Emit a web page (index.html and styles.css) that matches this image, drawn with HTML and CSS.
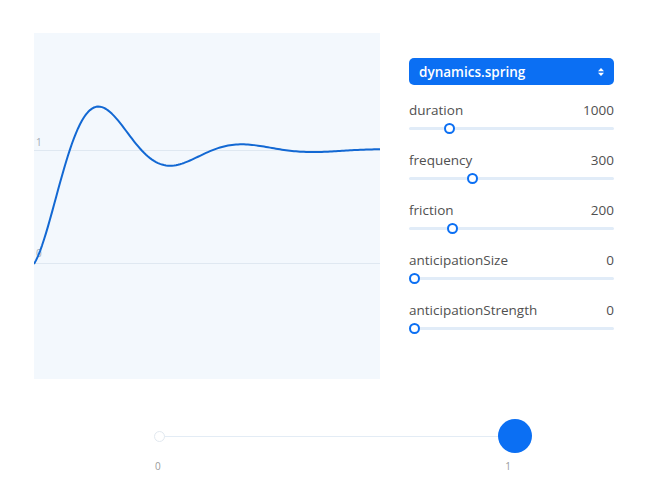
FILE: index.html
```html
<!DOCTYPE html>
<html lang="en">
<head>
<meta charset="utf-8">
<title>dynamics.spring</title>
<link rel="stylesheet" href="styles.css">
</head>
<body>
<div class="app">
  <div class="top">
    <div class="chart">
      <svg class="chart-svg" width="346" height="346" viewBox="0 0 346 346">
        <line class="grid" x1="0" y1="117.5" x2="346" y2="117.5"/>
        <line class="grid" x1="0" y1="230.5" x2="346" y2="230.5"/>
        <text class="axis-label" x="2" y="113">1</text>
        <text class="axis-label" x="2" y="224">0</text>
        <path id="curve" class="curve" d=""/>
      </svg>
    </div>
    <div class="panel">
      <div class="select">
        <span>dynamics.spring</span>
        <svg class="caret" width="6" height="8" viewBox="0 0 6 8"><polygon points="0,3.2 3,0 6,3.2"/><polygon points="0,4.8 3,8 6,4.8"/></svg>
      </div>
      <div class="param">
        <div class="param-head"><span>duration</span><span>1000</span></div>
        <div class="track-wrap"><div class="track"></div><span class="thumb" style="left:35px"></span></div>
      </div>
      <div class="param">
        <div class="param-head"><span>frequency</span><span>300</span></div>
        <div class="track-wrap"><div class="track"></div><span class="thumb" style="left:58px"></span></div>
      </div>
      <div class="param">
        <div class="param-head"><span>friction</span><span>200</span></div>
        <div class="track-wrap"><div class="track"></div><span class="thumb" style="left:38px"></span></div>
      </div>
      <div class="param">
        <div class="param-head"><span>anticipationSize</span><span>0</span></div>
        <div class="track-wrap"><div class="track"></div><span class="thumb" style="left:0px"></span></div>
      </div>
      <div class="param">
        <div class="param-head"><span>anticipationStrength</span><span>0</span></div>
        <div class="track-wrap"><div class="track"></div><span class="thumb" style="left:0px"></span></div>
      </div>
    </div>
  </div>
  <div class="scrub">
    <div class="scrub-track">
      <div class="scrub-line"></div>
      <span class="dot-start"></span>
      <span class="dot-end"></span>
    </div>
    <div class="scrub-labels"><span>0</span><span>1</span></div>
  </div>
</div>
<script src="script.js"></script>
</body>
</html>
```

FILE: styles.css
```css
body {
  margin: 0;
  background: #ffffff;
  font-family: "Open Sans", "Noto Sans", sans-serif;
}

.top {
  display: flex;
  gap: 29px;
  padding: 33px 0 0 34px;
}

.chart {
  width: 346px;
  height: 346px;
  background: #f3f8fd;
}

.chart-svg {
  display: block;
}

.grid {
  stroke: #dfe8f1;
  stroke-width: 1;
}

.axis-label {
  font-family: "Open Sans", sans-serif;
  font-size: 10px;
  fill: #a3abb3;
}

.curve {
  fill: none;
  stroke: #1268d3;
  stroke-width: 2;
  stroke-linejoin: round;
}

.panel {
  width: 205px;
  padding-top: 25px;
}

.select {
  height: 27px;
  box-sizing: border-box;
  border-radius: 5px;
  background: #0b6ff3;
  color: #ffffff;
  display: flex;
  align-items: center;
  justify-content: space-between;
  padding: 0 10px 0 10px;
  font-size: 13.5px;
  font-weight: 600;
  margin-bottom: 15px;
}

.caret {
  fill: #ffffff;
  display: block;
}

.param {
  margin-bottom: 15px;
}

.param-head {
  display: flex;
  justify-content: space-between;
  font-size: 13.5px;
  line-height: 20px;
  color: #505050;
}

.track-wrap {
  position: relative;
  height: 13px;
  margin-top: 2px;
  display: flex;
  align-items: center;
}

.track {
  width: 100%;
  height: 3px;
  border-radius: 2px;
  background: #e1ecf8;
}

.thumb {
  position: absolute;
  top: 1px;
  width: 11px;
  height: 11px;
  box-sizing: border-box;
  border: 2px solid #0b6ff3;
  border-radius: 50%;
  background: #ffffff;
}

.scrub {
  margin: 40px 0 0 159px;
  width: 356px;
}

.scrub-track {
  position: relative;
  height: 34px;
  display: flex;
  align-items: center;
}

.scrub-line {
  width: 100%;
  height: 1px;
  background: #e3ecf5;
}

.dot-start {
  position: absolute;
  left: -5px;
  top: 11.5px;
  width: 11px;
  height: 11px;
  box-sizing: border-box;
  border: 1px solid #e2e9f0;
  border-radius: 50%;
  background: #ffffff;
}

.dot-end {
  position: absolute;
  left: 339px;
  top: 0;
  width: 34px;
  height: 34px;
  border-radius: 50%;
  background: #0b6ff3;
}

.scrub-labels {
  display: flex;
  justify-content: space-between;
  margin: 7px 0 0 -4px;
  width: 356px;
  font-size: 10px;
  line-height: 12px;
  color: #9a9a9a;
}
```

FILE: script.js
```js
(function () {
  var a = 0.0142, w = 0.0439, d = [];
  for (var t = 0; t <= 346; t += 2) {
    var v = 1 - Math.exp(-a * t) * Math.cos(w * t);
    var y = 231 - 114 * v;
    d.push((t === 0 ? "M" : "L") + t + " " + y.toFixed(2));
  }
  document.getElementById("curve").setAttribute("d", d.join(" "));
})();
```
